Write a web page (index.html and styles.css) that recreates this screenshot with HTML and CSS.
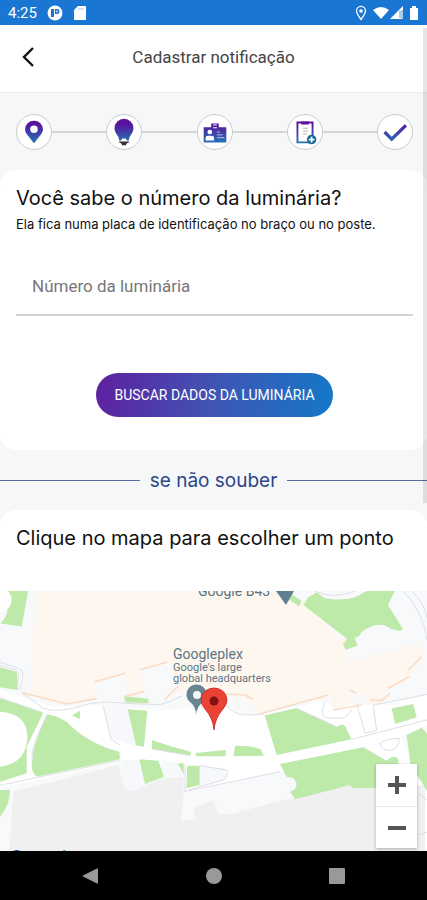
FILE: index.html
```html
<!DOCTYPE html>
<html lang="pt-BR">
<head>
    <meta charset="UTF-8">
    <meta name="viewport" content="width=device-width, initial-scale=1.0">
    <link rel="stylesheet" href="styles.css">
    <title>Cadastrar notificação</title>
</head>
<body>
    <div class="status-bar">
        <span class="clock">4:25</span>
        <svg width="16" height="16" viewBox="0 0 16 16"><circle cx="8" cy="8" r="7.500" fill="#fff"/><path d="M4 4h3v8H4zM8 4h2a2.500 2.500 0 0 1 0 5H8z" fill="#1976d2"/><path d="M9.300 5.500h1.200v2H9.300z" fill="#fff"/></svg>
        <svg width="14" height="16" viewBox="0 0 14 16"><path d="M5 1h7a1 1 0 0 1 1 1v12a1 1 0 0 1-1 1H2a1 1 0 0 1-1-1V5z" fill="#fff"/><path d="M6 3v2M8 3v2M10 3v2" stroke="#a5caee"/></svg>
        <div class="status-right">
            <svg width="12" height="16" viewBox="0 0 12 16"><path d="M6 14.500C3 10.500 1.500 8.300 1.500 5.800a4.500 4.500 0 0 1 9 0C10.500 8.300 9 10.500 6 14.500z" fill="none" stroke="#fff" stroke-width="1.300"/><circle cx="6" cy="6" r="1.800" fill="#fff"/></svg>
            <svg width="52" height="16" viewBox="0 0 52 16"><path d="M4 5Q12-1 20 5l-8 9z" fill="#fff"/><path d="M21 14L34 1v13z" fill="#fff"/><path d="M31 6v7M33 5v9" stroke="#6ca8e2" stroke-width="1.200"/><path d="M41 3h2V1h4v2h2v12h-8z" fill="#fff"/></svg>
        </div>
    </div>

    <header class="top-bar">
        <button class="back-button" type="button" aria-label="Voltar">
            <svg width="24" height="24" viewBox="0 0 24 24"><path d="M17 3L8 12l9 9" fill="none" stroke="#111" stroke-width="2.400"/></svg>
        </button>
        <h1>Cadastrar notificação</h1>
    </header>

    <ol class="steps">
        <li>
            <svg viewBox="0 0 36 36">
                <defs>
                    <linearGradient id="brand" x1="0" y1="6" x2="0" y2="30" gradientUnits="userSpaceOnUse">
                        <stop offset="0.100" stop-color="#5b0f9b"/>
                        <stop offset="1" stop-color="#2277b8"/>
                    </linearGradient>
                </defs>
                <path d="M18 30C12 22 8.500 19 8.500 15a9.500 9 0 0 1 19 0C27.500 19 24 22 18 30zM18 11a4 4 0 1 0 0 8 4 4 0 0 0 0-8z" fill="url(#brand)"/>
            </svg>
        </li>
        <li>
            <svg viewBox="0 0 36 36">
                <path d="M18 4a10 10 0 0 1 10 10c0 4-2 6-4 9l-1 4h-2l-1-2h-4l-1 2h-2l-1-4c-2-3-4-5-4-9A10 10 0 0 1 18 4z" fill="url(#brand)"/>
                <path d="M13 28h10v1.500l-2 .500-1 2h-4l-1-2-2-.500z" fill="#333"/>
            </svg>
        </li>
        <li>
            <svg viewBox="0 0 36 36">
                <path d="M6 13h8V9h8v4h8v16H6z" fill="url(#brand)"/>
                <path d="M16 10.500h4M16 13.500h4" stroke="#fff"/>
                <circle cx="12.500" cy="18" r="2.500" fill="#fff"/>
                <path d="M8 27v-3q0-2 2.500-2h4q2.500 0 2.500 2v3z" fill="#fff"/>
                <path d="M20 18h3M20 21h6M20 24h8" stroke="#c8c7e8"/>
            </svg>
        </li>
        <li>
            <svg viewBox="0 0 36 36">
                <path d="M10 8h16v21H10z" fill="#fff" stroke="url(#brand)" stroke-width="2"/>
                <path d="M14 7h8v3h-8z" fill="url(#brand)"/>
                <path d="M16 14h5M16 17h5M16 20h4" stroke="#aaa"/>
                <circle cx="25" cy="26" r="5" fill="#176a96"/>
                <path d="M25 23v6M22 26h6" stroke="#fff" stroke-width="1.800"/>
            </svg>
        </li>
        <li>
            <svg viewBox="0 0 36 36"><path d="M7 18l7.500 7.500L29.500 11" fill="none" stroke="url(#brand)" stroke-width="3.500"/></svg>
        </li>
    </ol>

    <main>
        <form class="card search-card">
            <h2>Você sabe o número da luminária?</h2>
            <p id="hint">Ela fica numa placa de identificação no braço ou no poste.</p>
            <input type="text" name="numero" aria-label="Número da luminária" aria-describedby="hint" placeholder="Número da luminária">
            <button class="search-button" type="button">BUSCAR DADOS DA LUMINÁRIA</button>
        </form>

        <div class="divider"><span>se não souber</span></div>

        <section class="card map-card">
            <h2>Clique no mapa para escolher um ponto</h2>
            <div class="map">
                <svg class="map-drawing" viewBox="0 0 427 260" preserveAspectRatio="xMidYMin slice">
                    <g transform="scale(0.33333) translate(0 -3)">
                        <rect width="1281" height="790" fill="#f8f9fb"/>
                        <!-- roads and open ground -->
                        <path d="M0 300L160 350 260 345 480 360 690 350 720 375 790 372 960 335 1070 345 1180 345 1281 315V405L1200 440 1240 500 1281 600V790H1230L1200 520 840 545 555 610 550 525 360 515 0 595z" fill="#fff"/>
                        <path d="M310 350h70l28 120-75-25zM365 510h55l15 75-35 18-20-6zM485 510l45 8 25 45-45-10zM600 530l75 5q12 25 0 35l-75 20z" fill="#f6f8fb"/>
                        <!-- car park -->
                        <path d="M40 605L355 525l20 72 25 6 85-38 65-5v120l25-2 5-25 60-25 15 45 190-55 35 8 165-40h230v200H28z" fill="#f0f0f0"/>
                        <path d="M552 612L845 545q45 10 45 35 0 20-15 45l-185 48-35-2-5-45-70 27 5 32-42 8z" fill="#f7f9fb"/>
                        <!-- buildings -->
                        <path d="M110 0H835L920 45 1035 160 1045 215 1260 160 1270 200 1225 265 1140 315 1165 330 1110 345 1070 305 1050 300 1060 340 1000 360 985 318 780 375 735 325 540 305 495 330 520 290 440 230 430 305 375 325 290 325 205 342 90 320z" fill="#fef7f0"/>
                        <path d="M282 278l90-25 10 65-92 8zM418 240l85-22 35 70-45 45-50 5z" fill="#f8f9fb"/>
                        <!-- green areas -->
                        <g fill="#bde9a9">
                            <path d="M25 0H85L65 110 0 100Q30 80 25 0zM0 232L50 245 55 300 0 292zM0 325L130 368 80 470V550L0 575V530Q80 520 82 440 82 370 0 365zM0 600H30Q30 645 0 680z"/>
                            <path d="M140 373Q185 378 215 410 275 465 358 485L360 508 110 560Q90 545 97 510 97 470 140 373zM216 376l24-14v26zM372 318L445 326V340L375 337zM383 358L442 362 432 470 408 466z"/>
                            <path d="M456 450Q510 470 572 485V496L456 477zM587 489L677 480V499H587zM705 467Q760 467 782 478L792 497 700 499zM418 508L475 512 492 560 435 582zM533 520h18v33zM562 527h37v58l-40 10z"/>
                            <path d="M794 376L888 355 1010 410Q1035 395 1040 420L1055 448 830 495zM840 522L1090 472 1160 512Q1185 490 1195 510V594H1058L1050 585 885 628 870 605Q890 600 890 580 885 560 860 560z"/>
                            <path d="M830 3h33l42 30-8 16zM925 22l25-15 25 18q60 10 100-8l25-14h84l-20 42 45 72q-5 10-35 0-40-30-90 10-10 20-20 15l8 25-35 12-8-15 12-18L910 45zM1175 355L1240 342 1250 382 1185 402zM1220 435l45-22 16 18v172l-50-82z"/>
                        </g>
                        <circle cx="0" cy="30" r="35" fill="#fff"/>
                        <!-- road edges -->
                        <g fill="none" stroke="#dcdfe6" stroke-width="3">
                            <path d="M0 217L55 234Q72 242 68 265L60 298M0 227L45 238Q58 244 55 265L50 300M67 310L130 355Q170 370 250 347 290 330 375 340L480 344Q515 335 545 318M0 323L128 368M0 586L360 511M98 515Q85 480 145 372M310 350L333 448 360 465M456 477L570 497"/>
                            <path d="M555 522V605L840 545M600 527L680 540Q690 555 670 570L565 600M680 345Q700 375 740 375L790 373M890 355L1010 410M975 335Q955 385 985 384H1035L1055 360M1070 340L1095 430 1130 422 1120 345 1281 313M1055 448L1281 390M1140 460Q1160 445 1198 445 1198 475 1170 482 1145 480 1140 460M1255 610l26 20M1255 735l26-8"/>
                            <path d="M945 3Q1000 30 1065 3M1210 3Q1270 65 1281 150M1235 3Q1275 40 1281 85"/>
                        </g>
                        <!-- building edges -->
                        <path d="M282 276L375 250M418 240L502 216M375 320L432 304M495 328L535 288M67 308L200 342 290 326M680 312L735 315 758 328M778 372L985 315M1000 360L1085 345M1050 300l20 10M1165 295L1228 260M1225 240L1265 200M1110 330l35 2 25-22M1030 165l5-12" fill="none" stroke="#fadcc6" stroke-width="5"/>
                    </g>
                    <!-- places -->
                    <g class="place-names">
                        <text x="198" y="5">Google B43</text>
                        <text x="173" y="68">Googleplex</text>
                        <text class="small" x="173" y="80">Google's large</text>
                        <text class="small" x="173" y="91">global headquarters</text>
                    </g>
                    <path d="M276 0h18l-8 14z" fill="#5f8090"/>
                    <path d="M196 124q0-9-6-13a10 10 0 1 1 13 0q-6 4-7 13zM197 100a4 4 0 1 0 0 8 4 4 0 0 0 0-8z" fill="#688594"/>
                    <path d="M214 139q-1-12-9-21-4-5-4-9a13 12 0 0 1 26 0q0 4-4 9-8 9-9 21z" fill="#ea4335" stroke="#c5221f" stroke-width="0.800"/>
                    <circle cx="214" cy="110" r="4.500" fill="#811411"/>
                    <text class="map-brand" x="9" y="275"><tspan fill="#1a56c4">G</tspan><tspan fill="#ea4335">o</tspan><tspan fill="#fbbc05">o</tspan><tspan fill="#1a56c4">g</tspan><tspan fill="#34a853">l</tspan><tspan fill="#ea4335">e</tspan></text>
                </svg>
                <div class="zoom-control">
                    <button type="button" aria-label="Aumentar zoom"><svg width="20" height="20" viewBox="0 0 20 20"><path d="M10 1v18M1 10h18" stroke="#555" stroke-width="4"/></svg></button>
                    <button type="button" aria-label="Diminuir zoom"><svg width="20" height="20" viewBox="0 0 20 20"><path d="M1 10h18" stroke="#555" stroke-width="4"/></svg></button>
                </div>
            </div>
        </section>
        <div class="scroll-thumb"></div>
    </main>

    <nav class="android-nav">
        <button type="button" aria-label="Voltar"><svg width="18" height="18" viewBox="0 0 18 18"><path d="M16 1v16L0 9z" fill="#999"/></svg></button>
        <button type="button" aria-label="Início"><svg width="18" height="18" viewBox="0 0 18 18"><circle cx="9" cy="9" r="8" fill="#999"/></svg></button>
        <button type="button" aria-label="Recentes"><svg width="18" height="18" viewBox="0 0 18 18"><rect x="1" y="1" width="16" height="16" rx="1" fill="#999"/></svg></button>
    </nav>
</body>
</html>
```
FILE: styles.css
```css
* {
    box-sizing: border-box;
}

body {
    position: relative;
    display: flex;
    flex-direction: column;
    min-height: 100vh;
    margin: 0;
    background: #f5f7f9;
    color: #111;
    font-family: Roboto, sans-serif;
}

button {
    padding: 0;
    border: 0;
    background: none;
    cursor: pointer;
}

svg {
    display: block;
}

.status-bar {
    display: flex;
    align-items: center;
    gap: 10px;
    height: 25px;
    padding: 0 6px 0 8px;
    background: #1976d2;
    color: #fff;
}

.clock {
    font-size: 15px;
}

.status-right {
    display: flex;
    gap: 2px;
    margin-left: auto;
}

.top-bar {
    display: grid;
    grid-template-columns: 40px 1fr 40px;
    align-items: center;
    height: 68px;
    padding: 0 8px 4px;
    background: #fff;
    border-bottom: 1px solid #eceeef;
}

.back-button {
    display: flex;
    align-items: center;
    justify-content: center;
    height: 40px;
}

.top-bar h1 {
    margin: 0;
    color: #444;
    font-size: 17px;
    font-weight: 400;
    text-align: center;
}

.steps {
    display: flex;
    margin: 0;
    padding: 21px 14px 20px 16px;
    list-style: none;
}

.steps li {
    display: flex;
    align-items: center;
}

.steps li + li {
    flex: 1;
}

.steps li + li::before {
    content: "";
    flex: 1;
    height: 2px;
    background: #d3d5d7;
}

.steps svg {
    width: 36px;
    height: 36px;
    border: 1px solid #c8cacc;
    border-radius: 50%;
    background: #fff;
}

main {
    display: flex;
    flex: 1;
    flex-direction: column;
}

.card {
    display: flex;
    flex-direction: column;
    background: #fff;
    border-radius: 16px;
}

.card h2 {
    margin: 0;
    font-family: Inter, sans-serif;
    font-size: 20px;
    font-weight: 400;
    line-height: 24px;
}

.search-card {
    padding: 16px 14px 32px 16px;
}

.search-card p {
    margin: 4px 0 28px;
    font-family: Inter, sans-serif;
    font-size: 13px;
    line-height: 20px;
}

.search-card input {
    width: 100%;
    height: 54px;
    padding: 0 16px 4px;
    border: 0;
    border-bottom: 2px solid #d5d5d5;
    background: none;
    font-family: Roboto, sans-serif;
    font-size: 17px;
}

.search-card input::placeholder {
    color: #777;
}

.search-button {
    align-self: center;
    height: 44px;
    margin-top: 57px;
    padding: 0 18px;
    border-radius: 22px;
    background: linear-gradient(100deg, #5f1fa0, #3f55b5 50%, #1378c8);
    color: #fff;
    font-family: Roboto, sans-serif;
    font-size: 14px;
}

.search-card {
    padding-bottom: 33px;
}

.divider {
    display: flex;
    align-items: center;
    gap: 10px;
    height: 60px;
    color: #2c4585;
    font-family: Inter, sans-serif;
    font-size: 19px;
}

.divider::before,
.divider::after {
    content: "";
    flex: 1;
    height: 1px;
    background: #5a6da3;
}

.map-card {
    flex: 1;
    border-radius: 16px 16px 0 0;
}

.map-card h2 {
    padding: 16px 16px 41px;
}

.map {
    position: relative;
    flex: 1;
    height: 260px;
    overflow: hidden;
}

.map-drawing {
    width: 100%;
    height: 100%;
}

.place-names {
    fill: #5b7482;
    font-size: 14px;
}

.place-names .small {
    font-size: 11px;
}

.map-brand {
    font-size: 22px;
}

.zoom-control {
    position: absolute;
    right: 10px;
    bottom: 3px;
    width: 41px;
    background: #fff;
    box-shadow: 0 1px 3px rgba(0, 0, 0, 0.3);
}

.zoom-control button {
    display: flex;
    align-items: center;
    justify-content: center;
    width: 100%;
    height: 42px;
}

.zoom-control button + button {
    border-top: 1px solid #e6e6e6;
}

.scroll-thumb {
    position: absolute;
    top: 28px;
    right: 0;
    width: 4px;
    height: 475px;
    background: rgba(0, 0, 0, 0.1);
}

.android-nav {
    display: flex;
    justify-content: center;
    gap: 75px;
    height: 49px;
    background: #000;
}

.android-nav button {
    display: flex;
    align-items: center;
    justify-content: center;
    width: 48px;
}
```
